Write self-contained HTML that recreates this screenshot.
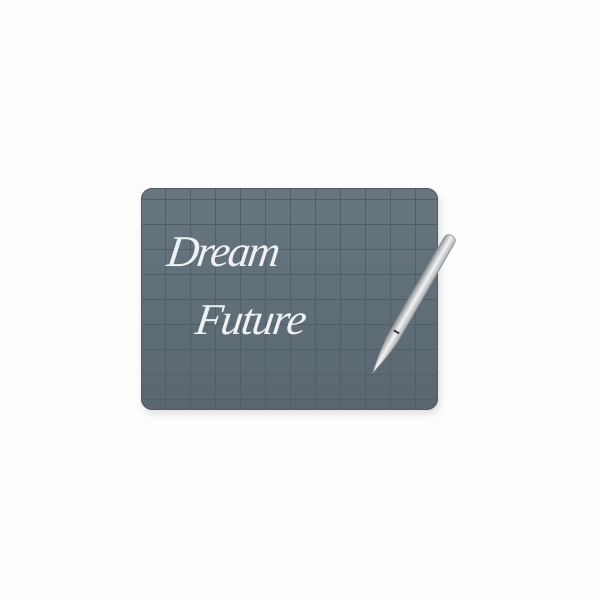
<!DOCTYPE html>
<html><head><style>
html,body{margin:0;padding:0;background:#fdfdfd;width:600px;height:600px;overflow:hidden}
</style></head><body>
<svg width="600" height="600" viewBox="0 0 600 600" xmlns="http://www.w3.org/2000/svg">
<defs>
<linearGradient id="bg" x1="0" y1="0" x2="0" y2="1">
<stop offset="0" stop-color="#67767f"/><stop offset="1" stop-color="#5a6770"/>
</linearGradient>
<pattern id="grid" x="141" y="199" width="25" height="25" patternUnits="userSpaceOnUse">
<path d="M24.5 0V25M0 0.5H25" stroke="#525e67" stroke-width="1" fill="none"/>
</pattern>
<linearGradient id="pen" x1="0" y1="0" x2="1" y2="0">
<stop offset="0" stop-color="#8e9398"/><stop offset="0.5" stop-color="#f2f3f4"/><stop offset="1" stop-color="#a9adb1"/>
</linearGradient>
<filter id="sh" x="-20%" y="-20%" width="140%" height="140%"><feGaussianBlur stdDeviation="4"/></filter>
</defs>
<rect x="143" y="192" width="297" height="222" rx="12" fill="#000" opacity="0.12" filter="url(#sh)"/>
<rect x="141" y="188" width="297" height="222" rx="11" fill="url(#bg)"/>
<rect x="141" y="188" width="297" height="222" rx="11" fill="url(#grid)"/>
<rect x="141.5" y="188.5" width="296" height="221" rx="11" fill="none" stroke="#505c64"/>
<text x="168" y="266" font-family="Liberation Serif, serif" font-style="italic" font-size="44" fill="#eef1f3" letter-spacing="-2" transform="skewX(-8) translate(35,0)">Dream</text>
<text x="196" y="334" font-family="Liberation Serif, serif" font-style="italic" font-size="44" fill="#eef1f3" letter-spacing="-1.5" transform="skewX(-8) translate(45,0)">Future</text>
<g transform="translate(412,305) rotate(30)">
<path d="M-6,-74 Q-6,-80 0,-80 Q6,-80 6,-74 L6,38 Q5,55 0,79 Q-5,55 -6,38 Z" fill="url(#pen)" stroke="#8a9096" stroke-width="0.8"/>
<rect x="-3" y="30" width="6" height="2" fill="#333"/>
</g>
</svg>
</body></html>
